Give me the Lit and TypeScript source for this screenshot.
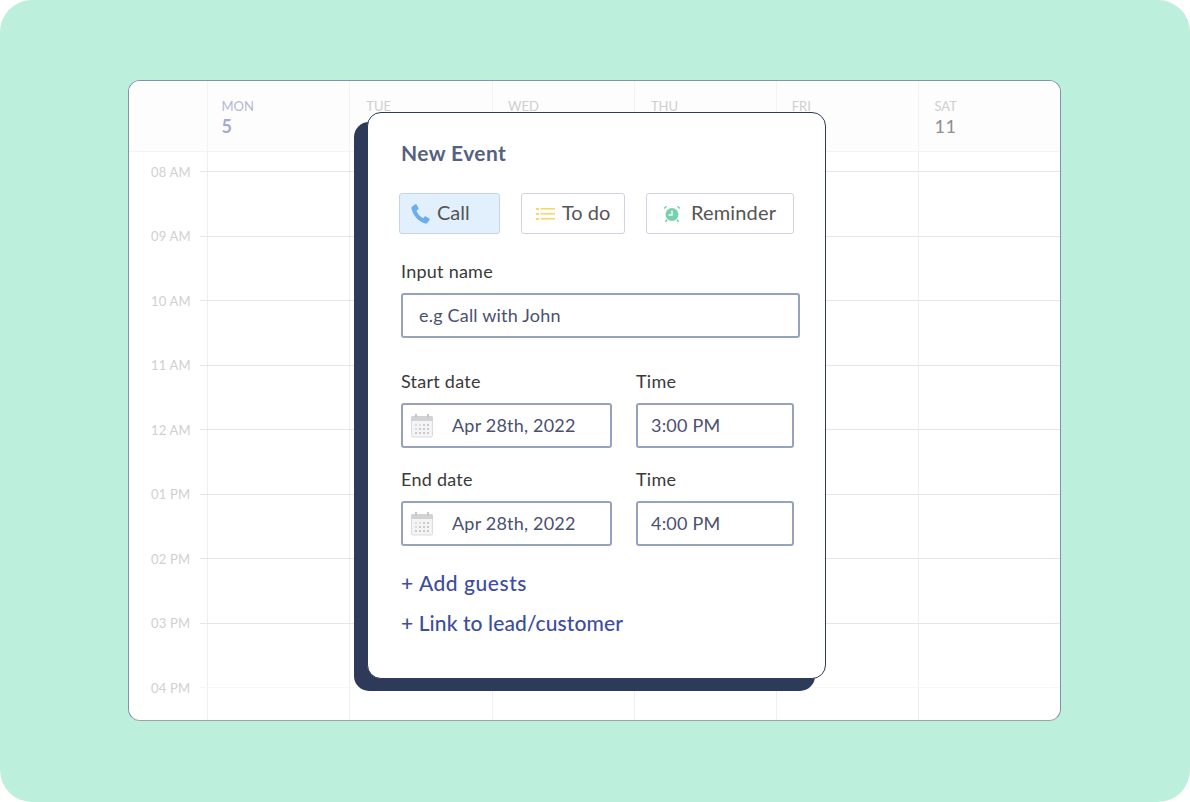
import { LitElement, html, css, svg } from "lit";
import { customElement } from "lit/decorators.js";

const days = [
  { d: "MON", n: "5", on: true, pad: 13.5 },
  { d: "TUE", n: "", pad: 16 },
  { d: "WED", n: "", pad: 15.5 },
  { d: "THU", n: "", pad: 16 },
  { d: "FRI", n: "", pad: 14.5 },
  { d: "SAT", n: "11", pad: 15 },
];
const hours = ["08 AM", "09 AM", "10 AM", "11 AM", "12 AM", "01 PM", "02 PM", "03 PM", "04 PM"];

const phone = html`<svg class="ic" width="22" height="22" viewBox="0 0 22 22"><path d="M2.200 3.600 5.200 1.200c.5-.4 1.100-.2 1.400.3l1.900 3.600c.2.500.1 1-.3 1.300L6.600 7.600c.7 3 3.500 6.400 6.600 7.600l1.300-1.500c.4-.4.900-.5 1.400-.2l3.500 2.200c.5.300.6 1 .2 1.400l-2.400 2.800c-.5.600-1.300.8-2.100.5C8.500 18.800 2.900 12.400 1.500 5.600c-.2-.8.1-1.500.7-2z" fill="#6aaef0"/></svg>`;
const list = html`<svg class="ic" width="20" height="14" viewBox="0 0 20 14"><g fill="#f6d76b"><rect x="0" y="1" width="3" height="2"/><rect x="0" y="6" width="3" height="2"/><rect x="0" y="11" width="3" height="2"/><rect x="4.500" y="1" width="14.500" height="1.600"/><rect x="4.500" y="6" width="14.500" height="1.600"/><rect x="4.500" y="11" width="14.500" height="1.600"/></g></svg>`;
const alarm = html`<svg class="ic" width="18" height="18" viewBox="0 0 18 18"><circle cx="9" cy="9.500" r="6.500" fill="#76d2ac"/><path d="M9 5.500V10H5.500" fill="none" stroke="#fff" stroke-width="1.300"/><path d="M1 3.500 3.500 1.300M17 3.500 14.500 1.300M4 14.500 2.500 17M14 14.500 15.500 17" stroke="#76d2ac" stroke-width="1.500" fill="none"/></svg>`;

const dots = [0, 1, 2].flatMap((r) => [0, 1, 2, 3].map((c) => [c, r]));
const calendar = html`<svg class="cal" width="24" height="25" viewBox="0 0 24 25"><rect x="1.500" y="3.500" width="21" height="20.500" rx="1.500" fill="#f4f4f4" stroke="#dcdcdc"/><path d="M2.500 3h19A1.500 1.500 0 0 1 23 4.500V8H1V4.500A1.500 1.500 0 0 1 2.500 3z" fill="#d2d2d2"/><rect x="5" y="1" width="2" height="4" fill="#c8c8c8"/><rect x="17" y="1" width="2" height="4" fill="#c8c8c8"/>${dots.map(([c, r]) => svg`<circle cx="${6 + c * 4}" cy="${12 + r * 4}" r="1" fill="${c + r > 1 ? "#bdbdbd" : "#d6d6d6"}"/>`)}</svg>`;

@customElement("app-root")
export class AppRoot extends LitElement {
  static styles = css`
    :host { display: block; width: 1190px; height: 802px; background: #fff; font-family: "Lato", "Liberation Sans", sans-serif; }
    .page { width: 1190px; height: 802px; box-sizing: border-box; background: #bdf0dc; border-radius: 32px; padding: 80px 129px 81px 128px; }
    .frame { position: relative; height: 641px; box-sizing: border-box; background: #fff; border: 1px solid #8490ad; border-bottom-color: #9aa3a8; border-radius: 12px; display: flex; flex-direction: column; }
    .head { height: 70px; flex: none; display: grid; grid-template-columns: 78px repeat(6, 142.300px); background: #fdfdfd; border-bottom: 1px solid #f3f3f4; border-radius: 11px 11px 0 0; }
    .hc { padding-top: 17px; border-left: 1px solid #f3f3f4; box-sizing: border-box; }
    .hc:first-child { border-left: 0; }
    .dn { font-size: 13px; line-height: 16px; color: #cfcfcf; }
    .dd { font-size: 18px; line-height: 24px; color: #8f8f8f; letter-spacing: .6px; font-weight: 400; }
    .on .dn { color: #b4b7d9; }
    .on .dd { color: #a5a9d4; font-weight: 700; }
    .body { flex: 1; display: grid; grid-template-columns: 78px repeat(6, 142.300px); min-height: 0; overflow: hidden; border-radius: 0 0 11px 11px; }
    .vl { grid-row: 1; border-left: 1px solid #efeff0; }
    .vl.first { border-left: 0; }
    .rows { grid-row: 1; grid-column: 1 / -1; display: flex; flex-direction: column; margin-top: -12.500px; }
    .row { height: 64.500px; flex: none; display: flex; align-items: center; }
    .row .t { width: 71px; flex: none; box-sizing: border-box; padding-left: 22px; font-size: 13px; color: #d0d0d0; letter-spacing: .2px; white-space: nowrap; }
    .row .l { flex: 1; height: 1px; background: #e6e6e8; }
    .row.last .l { background: #f6f6f7; }
    .card { position: absolute; left: 238px; top: 31px; width: 459px; height: 567px; box-sizing: border-box; background: #fff; border: 1px solid #2d3a5a; border-radius: 14px; box-shadow: -12px 11px 0 1px #2d3a5a; padding: 26px 25px 0 33px; color: #3a3a3a; }
    h2 { margin: 0; font-size: 21px; line-height: 28px; font-weight: 700; color: #55617f; letter-spacing: .4px; }
    .types { display: flex; margin: 26px 0 0 -2px; }
    .ty { height: 41px; box-sizing: border-box; border: 1px solid #cfd3e0; border-radius: 3px; background: #fff; display: flex; align-items: center; font-size: 20px; color: #555; padding-bottom: 3px; }
    .ty .ic { margin-top: 3px; }
    .ty.call { width: 101px; background: #e2effc; padding-left: 10px; gap: 5px; border-color: #c6d5e6; margin-right: 21px; }
    .ty.todo { width: 104px; padding-left: 14px; gap: 6px; margin-right: 21px; }
    .ty.rem { width: 148px; padding-left: 16px; gap: 10px; letter-spacing: .15px; }
    .ic { flex: none; display: block; }
    label { display: block; font-size: 18px; line-height: 22px; color: #3a3a3a; letter-spacing: .25px; }
    .lab1 { margin-top: 26px; }
    .input { box-sizing: border-box; height: 45px; border: 2px solid #97a2be; border-radius: 3px; display: flex; align-items: center; font-size: 18px; color: #4a5070; padding-bottom: 2px; letter-spacing: .2px; }
    .name { margin-top: 11px; width: 399px; padding-left: 16px; }
    .two { display: grid; grid-template-columns: 211px 158px; column-gap: 24px; }
    .g1 { margin-top: 32px; }
    .g2 { margin-top: 20px; }
    .two .input { margin-top: 11px; padding-left: 13px; }
    .cal { flex: none; margin: 2px 18px 0 -6px; }
    .link { font-size: 21px; line-height: 28px; color: #3d4da0; font-weight: 500; }
    .a1 { margin-top: 23px; letter-spacing: .55px; }
    .a2 { margin-top: 12px; letter-spacing: .1px; }
  `;

  render() {
    return html`<div class="page">
      <div class="frame">
        <div class="head">
          <div class="hc"></div>
          ${days.map((x) => html`<div class="hc ${x.on ? "on" : ""}" style="padding-left:${x.pad}px"><div class="dn">${x.d}</div><div class="dd">${x.n}</div></div>`)}
        </div>
        <div class="body">
          <div class="vl first" style="grid-column:1"></div>
          ${days.map((_, i) => html`<div class="vl" style="grid-column:${i + 2}"></div>`)}
          <div class="rows">
            ${hours.map((h, i) => html`<div class="row ${i === 8 ? "last" : ""}"><span class="t">${h}</span><span class="l"></span></div>`)}
          </div>
        </div>
        <div class="card">
          <h2>New Event</h2>
          <div class="types">
            <div class="ty call">${phone}<span>Call</span></div>
            <div class="ty todo">${list}<span>To do</span></div>
            <div class="ty rem">${alarm}<span>Reminder</span></div>
          </div>
          <label class="lab1">Input name</label>
          <div class="input name">e.g Call with John</div>
          <div class="two g1">
            <div><label>Start date</label><div class="input">${calendar}Apr 28th, 2022</div></div>
            <div><label>Time</label><div class="input">3:00 PM</div></div>
          </div>
          <div class="two g2">
            <div><label>End date</label><div class="input">${calendar}Apr 28th, 2022</div></div>
            <div><label>Time</label><div class="input">4:00 PM</div></div>
          </div>
          <div class="link a1">+ Add guests</div>
          <div class="link a2">+ Link to lead/customer</div>
        </div>
      </div>
    </div>`;
  }
}
